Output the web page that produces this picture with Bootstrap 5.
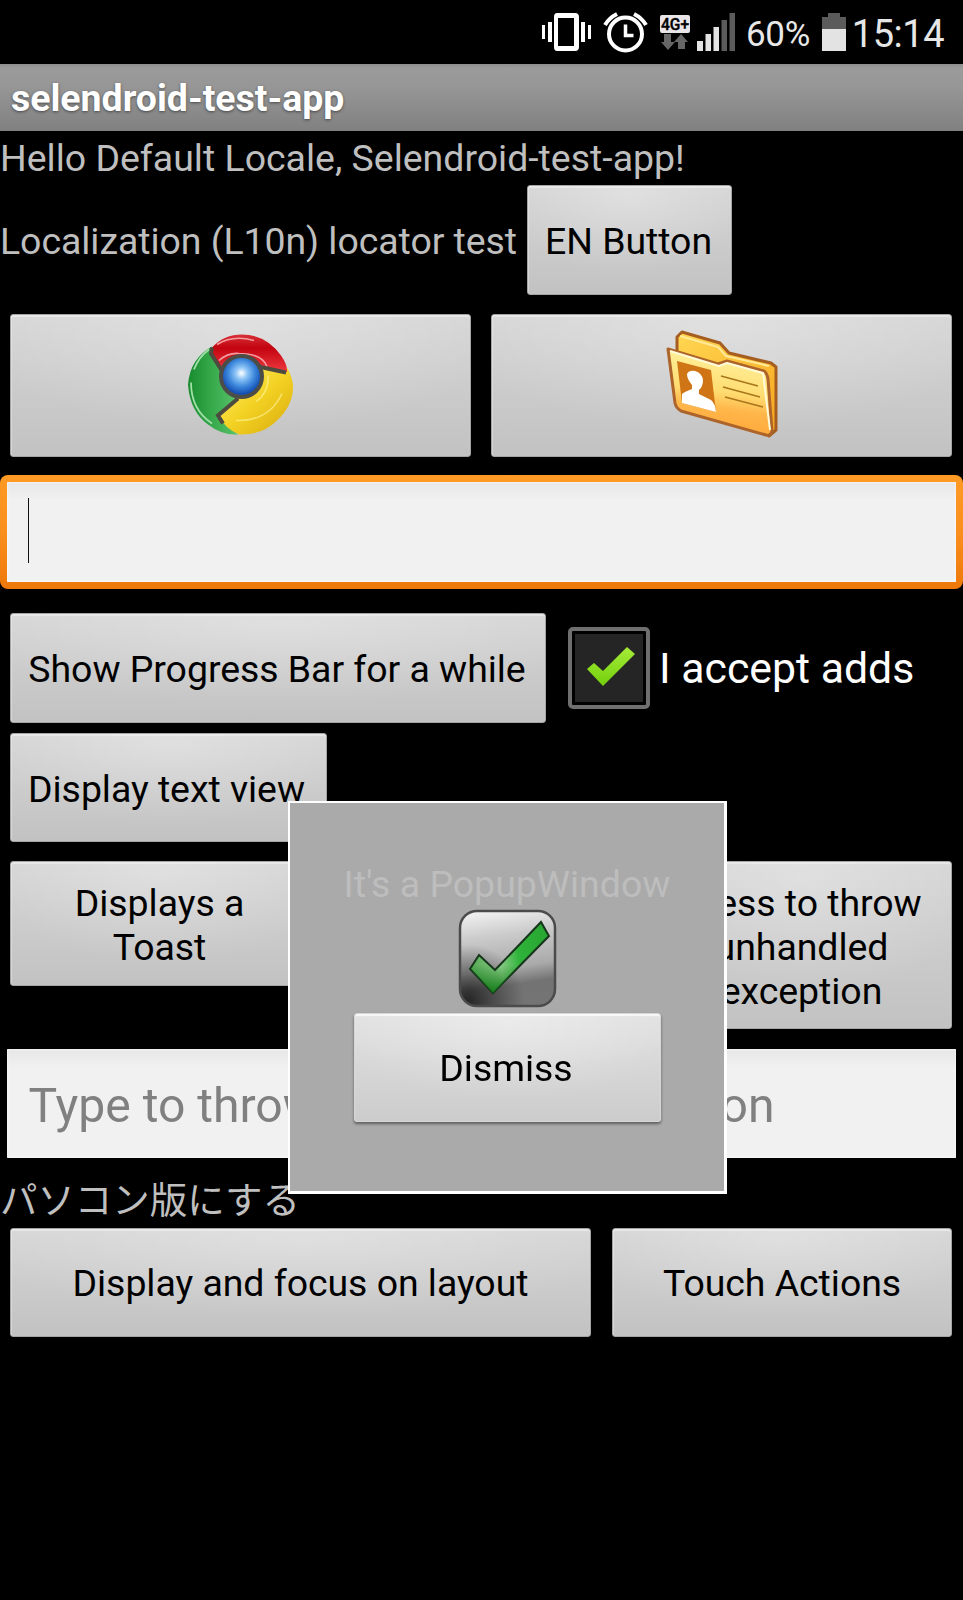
<!DOCTYPE html>
<html lang="en">
<head>
<meta charset="utf-8">
<meta name="viewport" content="width=device-width, initial-scale=1">
<title>selendroid-test-app</title>
<link href="https://cdn.jsdelivr.net/npm/bootstrap@5.3.0/dist/css/bootstrap.min.css" rel="stylesheet">
<style>
body{background:#000;font-family:Roboto,"Noto Sans CJK JP",sans-serif;font-size:37.45px;line-height:44px;color:#bfbfbf;overflow:hidden}
.phone{width:963px;height:1600px}
.status{height:64px;color:#e6e6e6;padding-right:19px}
.pct{font-size:34.5px;letter-spacing:-.3px}
.clock{font-size:38px;letter-spacing:-.5px;padding-top:4px;margin-left:5px}
.titlebar{height:67px;background:linear-gradient(#8d8d8d 0,#9b9b9b 4px,#969696 35%,#808080);color:#fff;padding-left:11px;text-shadow:0 1px 3px rgba(0,0,0,.5)}
.hello{padding-top:5px;height:54px}
.locator{width:527px;letter-spacing:-.05px;padding-top:2px}
.droid-btn.btn{font:inherit;letter-spacing:-.04px;color:#000;border:1px solid #a4a4a4;border-radius:3px;padding:2px 19px 0 17px;height:110px;
 background:radial-gradient(ellipse 60% 75% at 50% 8%,rgba(255,255,255,.26),rgba(255,255,255,0)),linear-gradient(#d6d6d6,#c2c2c2);
 box-shadow:inset 0 2px 1px rgba(255,255,255,.4),inset 1px 0 1px rgba(255,255,255,.3);white-space:nowrap}
.icon-row{height:143px;margin-top:19px;padding:0 11px 0 10px;gap:20px}
.icon-row .droid-btn.btn{height:143px;padding:0 2px 0 0}
.bottom-row .droid-btn.btn{height:109px;padding:1px 18px 0}
.focus-field{height:114px;margin-top:18px;border-radius:8px;padding:7px;background:linear-gradient(#ff9a25,#fa8f1e 50%,#ee780a)}
.field{background:linear-gradient(#e7e7e7,#f1f1f1 18%,#f1f1f1);border:0;border-radius:1px;box-shadow:inset 0 0 3px #fff}
.caret-line{width:1px;height:65px;background:#111;margin:16px 0 0 21px}
.checkbox-tile{width:82px;height:82px;border:4px solid #6f6f6f;border-radius:5px;background:#000;padding:3px}
.ads{font-size:42.8px;line-height:50px;color:#fff;padding-bottom:1px}
.hint-field{height:109px;margin:20px 7px 0;padding-left:21.5px;color:#808080;font-size:48.1px;line-height:113px;white-space:nowrap;overflow:hidden}
.japanese{height:70px;padding:21px 0 0 0}
.popup-window{left:288px;top:801px;width:439px;height:393px;background:#aaa;border:solid #fff;border-width:2px 3px 3px 2px;padding-top:59px;z-index:5}
.popup-label{color:#bdbdbd}
.dismiss.droid-btn.btn{width:307px;height:109px;padding-top:1px;filter:brightness(1.05);box-shadow:0 2px 3px rgba(0,0,0,.45),inset 0 2px 1px rgba(255,255,255,.5);border-color:#ccc}
</style>
</head>
<body>
<main class="phone position-relative">
<header class="status d-flex align-items-center justify-content-end">
<svg class="flex-shrink-0" width="312" height="64" viewBox="535 0 312 64" aria-hidden="true">
<g fill="#fff"><path fill-rule="evenodd" d="M557 13h18q4 0 4 4v30q0 4-4 4h-18q-3 0-3-4V17q0-4 3-4zm1 5v28h16V18z"/><path d="M542 25h3v14h-3zM548 22h4v20h-4zM581 22h4v20h-4zM588 25h3v14h-3z"/></g>
<g fill="none" stroke="#fff"><circle cx="625.5" cy="34" r="16.5" stroke-width="4"/><path d="M625.5 24.500v11h8" stroke-width="3.500"/><path d="M605 25q4-7 12-11M646 25q-4-7-12-11" stroke-width="4"/></g>
<rect x="660" y="15" width="30" height="18" rx="2" fill="#e9e5e9"/>
<text x="661" y="29.500" textLength="28" lengthAdjust="spacingAndGlyphs" font-family="Roboto" font-size="16.500" stroke="#000" stroke-width=".4" font-weight="500" fill="#000">4G+</text>
<path fill="#666" d="M664 34h7v8h4l-7 8-7-8h3zM678 49h7v-7h3l-7-8-7 8h4z"/>
<path fill="#e3e3e3" d="M697 41h6v10h-6zM705.500 34h5.500v17h-5.500zM713.500 27h5.500v24h-5.500z"/><path fill="#5b5b5b" d="M721.500 20h5.500v31h-5.500zM729.500 13h5.500v38h-5.500z"/>
<text x="746" y="45.500" font-family="Roboto" class="pct" fill="#e8e8e8" textLength="64" lengthAdjust="spacingAndGlyphs">60%</text>
<path fill="#5b5b5b" d="M828 13h12v4h6v13h-24V17h6z"/><path fill="#e3e3e3" d="M822 29h24v22h-24z"/>
</svg>
<span class="clock">15:14</span>
</header>
<div class="titlebar d-flex align-items-center fw-bold"><span>selendroid-test-app</span></div>
<div class="hello">Hello Default Locale, Selendroid-test-app!</div>
<div class="d-flex align-items-center"><span class="locator text-nowrap">Localization (L10n) locator test</span><button class="btn droid-btn" style="width:205px">EN Button</button></div>
<div class="icon-row d-flex">
<button class="btn droid-btn flex-fill d-flex align-items-center justify-content-center w-50" aria-label="Chrome">
<svg width="140" height="143" viewBox="0 0 140 143">
<defs>
<radialGradient id="cb" cx=".5" cy=".42"><stop offset="0" stop-color="#fff"/><stop offset=".3" stop-color="#8bc3f5"/><stop offset=".65" stop-color="#3d88dc"/><stop offset="1" stop-color="#1550b4"/></radialGradient>
<linearGradient id="cr" x2="0" y2="1"><stop stop-color="#d83038"/><stop offset=".35" stop-color="#c30410"/><stop offset="1" stop-color="#ef3a40"/></linearGradient>
<linearGradient id="cg" x2="1" y2="0"><stop stop-color="#188b2f"/><stop offset=".45" stop-color="#35a94a"/><stop offset="1" stop-color="#5cc36c"/></linearGradient>
<linearGradient id="cy" x2="1" y2="1"><stop stop-color="#fff172"/><stop offset=".5" stop-color="#f3d223"/><stop offset="1" stop-color="#d9a90d"/></linearGradient>
</defs>
<g transform="translate(0 -3.500)">
<path d="M42 36Q20 48 18 74Q20 101 38 114Q52 125 68 124L49 106 69 87 55 64Z" fill="url(#cg)"/>
<path d="M42 37Q54 24 72 24Q96 24 111 45Q118 55 117 62L72 54 52 60 41 43Z" fill="url(#cr)"/>
<path d="M117 62L90 57 69 87 49 106Q55 118 69 124Q92 125 107 110Q124 94 123 74Q122 66 117 57Z" fill="url(#cy)"/>
<path d="M21 72Q21 99 42 113M24 59Q29 46 39 39" fill="none" stroke="#a2dfa9" stroke-width="1.800"/>
<path d="M47 34Q63 24 84 30M49 50Q58 42 69 43Q92 43 97 56" fill="none" stroke="#f49ca0" stroke-width="1.600"/>
<path d="M66 110Q99 111 112 83M98 65Q99 82 86 91" fill="none" stroke="#fff8a0" stroke-width="1.500" opacity=".6"/>
<path d="M42 37L41 43 53 62M88 56L116 62M68 88L48 105 53 113" fill="none" stroke="#4d4a40" stroke-width="4"/>
<circle cx="71.500" cy="66" r="20.500" fill="url(#cb)" stroke="#4d4d48" stroke-width="4"/>
</g></svg>
</button>
<button class="btn droid-btn flex-fill d-flex align-items-center justify-content-center w-50" aria-label="Contacts">
<svg width="150" height="143" viewBox="0 0 150 143">
<defs><linearGradient id="ff" x1=".5" y1="0" x2=".35" y2="1"><stop stop-color="#fff3a2"/><stop offset=".48" stop-color="#ffdc70"/><stop offset=".68" stop-color="#ffb64a"/><stop offset="1" stop-color="#ffa637"/></linearGradient>
<linearGradient id="fb" x2=".7" y2="1"><stop stop-color="#ffd752"/><stop offset="1" stop-color="#f7a922"/></linearGradient></defs>
<g transform="translate(4 -4)" stroke-linejoin="round">
<path d="M27 42V27L32 22 70 33 79 43 121 53 126 57V120L119 126 106 105Z" fill="url(#fb)" stroke="#a65d20" stroke-width="3"/>
<path d="M30 26L68 37 76 46 119 56" fill="none" stroke="#ffea98" stroke-width="2"/>
<path d="M18 39L68 54 77 51 114 61Q117 63 118 69L122 121Q121 126 116 125L31 101Q26 98 25 93Z" fill="url(#ff)" stroke="#ad642b" stroke-width="3"/>
<path d="M20 41L69 56 77 53 113 63 120 120" fill="none" stroke="#fffbd8" stroke-width="2"/>
<path d="M27 51L61 60 66 102 32 93Z" fill="#cf7516"/>
<path d="M32 93V84Q34 82 42 79V75Q37 69 37 64Q39 60 45 61Q52 63 53 70Q53 77 49 80V84L61 90Q65 93 66 102Z" fill="#fff"/>
<path d="M71 66L108 76M73 77L110 87M75 87L113 97" stroke="#a9771c" stroke-width="1.800"/>
</g></svg>
</button>
</div>
<div class="focus-field"><div class="field h-100 d-flex" role="textbox"><div class="caret-line"></div></div></div>
<div class="d-flex align-items-center" style="margin:24px 0 0 10px">
<button class="btn droid-btn" style="width:536px">Show Progress Bar for a while</button>
<div class="d-flex align-items-center" style="margin-left:22px">
<div class="checkbox-tile"><svg class="d-block" width="68" height="68" viewBox="0 0 68 68"><defs><linearGradient id="gc" x2="0" y2="1"><stop stop-color="#a6ec39"/><stop offset="1" stop-color="#72cf0c"/></linearGradient></defs><rect width="68" height="68" fill="#252525"/><path d="M12 35L19 29 28 37 52 13 60 20 28 52Z" fill="url(#gc)"/></svg></div>
<span class="ads text-nowrap" style="margin-left:9px">I accept adds</span></div>
</div>
<div style="margin:10px 0 0 10px"><button class="btn droid-btn d-block" style="width:317px;height:109px;padding:2px 20px 0 16px">Display text view</button></div>
<div class="d-flex align-items-start justify-content-between" style="margin:19px 11px 0 10px">
<button class="btn droid-btn" style="width:301px;height:125px">Displays a<br>Toast</button>
<button class="btn droid-btn" style="width:302px;height:168px;padding:3px 17px 0 18px">Press to throw<br>unhandled<br>exception</button>
</div>
<div class="field hint-field">Type to throw unhandled exception</div>
<div class="japanese">パソコン版にする</div>
<div class="bottom-row d-flex justify-content-between" style="margin:0 11px 0 10px">
<button class="btn droid-btn" style="width:581px">Display and focus on layout</button>
<button class="btn droid-btn" style="width:340px">Touch Actions</button>
</div>
<section class="popup-window position-absolute d-flex flex-column align-items-center">
<div class="popup-label">It's a PopupWindow</div>
<svg class="flex-shrink-0" width="99" height="99" viewBox="0 0 99 99" style="margin:3px 0 5px">
<defs><linearGradient id="pg" x1=".4" x2=".55" y2="1"><stop stop-color="#eee"/><stop offset=".25" stop-color="#cbcbcb"/><stop offset=".6" stop-color="#aaa"/><stop offset=".78" stop-color="#737373"/><stop offset="1" stop-color="#747474"/></linearGradient>
<radialGradient id="pd" cx=".08" cy=".95" r=".6"><stop stop-color="#171717" stop-opacity=".85"/><stop offset="1" stop-color="#222" stop-opacity="0"/></radialGradient>
<linearGradient id="pc" x1="0" y1=".5" x2="1" y2=".3"><stop stop-color="#55a855"/><stop offset=".35" stop-color="#8bcc88"/><stop offset=".6" stop-color="#2fb33a"/><stop offset="1" stop-color="#28a632"/></linearGradient>
<linearGradient id="ps" x2="0" y2="1"><stop offset=".6" stop-color="#137a18" stop-opacity="0"/><stop offset="1" stop-color="#137a18"/></linearGradient></defs>
<rect x="2" y="2" width="95" height="95" rx="17" fill="url(#pg)"/><rect x="2" y="2" width="95" height="95" rx="17" fill="url(#pd)" stroke="#4b4b4b" stroke-width="2.500"/>
<path d="M12 60L21 46 37 61 83 13 91 27 35 84Z" fill="url(#pc)" stroke="#16351a" stroke-width="2"/><path d="M12 60L21 46 37 61 83 13 91 27 35 84Z" fill="url(#ps)"/>
</svg>
<button class="btn droid-btn dismiss">Dismiss</button>
</section>
</main>
<script src="https://cdn.jsdelivr.net/npm/bootstrap@5.3.0/dist/js/bootstrap.bundle.min.js"></script>
</body>
</html>
